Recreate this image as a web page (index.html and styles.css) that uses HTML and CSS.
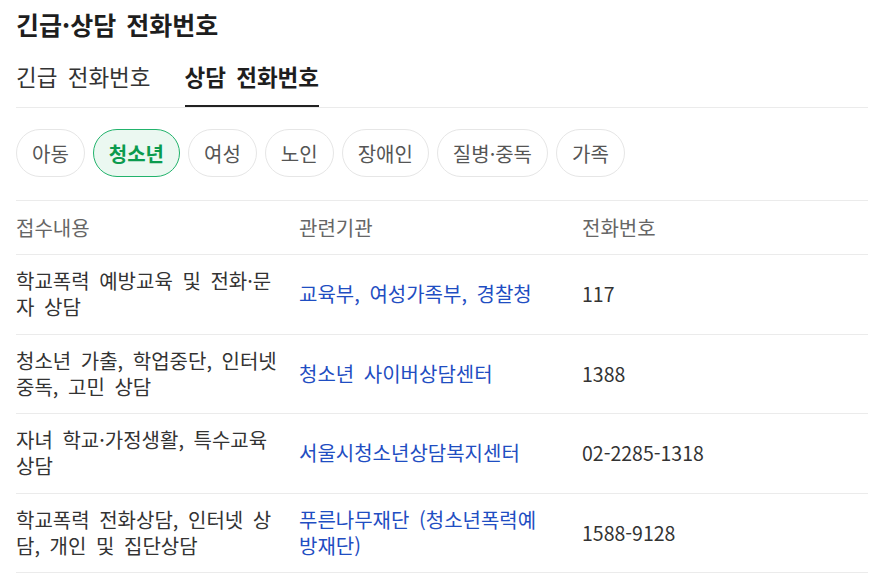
FILE: index.html
```html
<!DOCTYPE html>
<html lang="ko">
<head>
  <meta charset="utf-8">
  <title>긴급·상담 전화번호</title>
  <link rel="stylesheet" href="styles.css">
</head>
<body>
  <div class="phone-book">
    <h2 class="page-title">긴급·상담 전화번호</h2>

    <div class="tabs">
      <a class="tab">긴급 전화번호</a>
      <a class="tab active">상담 전화번호</a>
    </div>

    <div class="chips">
      <button class="chip">아동</button>
      <button class="chip active">청소년</button>
      <button class="chip">여성</button>
      <button class="chip">노인</button>
      <button class="chip">장애인</button>
      <button class="chip">질병·중독</button>
      <button class="chip">가족</button>
    </div>

    <table class="phone-table">
      <colgroup>
        <col class="col-desc">
        <col class="col-org">
        <col class="col-tel">
      </colgroup>
      <thead>
        <tr>
          <th>접수내용</th>
          <th>관련기관</th>
          <th>전화번호</th>
        </tr>
      </thead>
      <tbody>
        <tr>
          <td>학교폭력 예방교육 및 전화·문자 상담</td>
          <td><a href="#">교육부, 여성가족부, 경찰청</a></td>
          <td>117</td>
        </tr>
        <tr>
          <td>청소년 가출, 학업중단, 인터넷 중독, 고민 상담</td>
          <td><a href="#">청소년 사이버상담센터</a></td>
          <td>1388</td>
        </tr>
        <tr>
          <td>자녀 학교·가정생활, 특수교육 상담</td>
          <td><a href="#">서울시청소년상담복지센터</a></td>
          <td>02-2285-1318</td>
        </tr>
        <tr>
          <td>학교폭력 전화상담, 인터넷 상담, 개인 및 집단상담</td>
          <td><a href="#">푸른나무재단 (청소년폭력예방재단)</a></td>
          <td>1588-9128</td>
        </tr>
      </tbody>
    </table>
  </div>
</body>
</html>
```

FILE: styles.css
```css
* {
  margin: 0;
  padding: 0;
  box-sizing: border-box;
}

body {
  font-family: "Noto Sans CJK KR", "Noto Sans", sans-serif;
  background: #fff;
  color: #333;
  word-spacing: 4px;
}

.phone-book {
  width: 852px;
  margin-left: 16px;
  padding-top: 8px;
}

.page-title {
  font-size: 25px;
  line-height: 32px;
  font-weight: 700;
  color: #1e1e1e;
  word-spacing: 3px;
}

.tabs {
  display: flex;
  gap: 34px;
  border-bottom: 1px solid #ebebeb;
}

.tab {
  font-size: 22.5px;
  line-height: 28px;
  padding: 22px 0 15px;
  color: #333;
  border-bottom: 2px solid transparent;
  cursor: pointer;
}

.tab.active {
  font-weight: 700;
  color: #1e1e1e;
  border-bottom-color: #222;
}

.chips {
  display: flex;
  gap: 8px;
  padding: 21px 0 23px;
}

.chip {
  font-family: inherit;
  height: 48px;
  padding: 0 15px;
  font-size: 20px;
  color: #555;
  background: #fff;
  border: 1px solid #e6e6e6;
  border-radius: 24px;
  cursor: pointer;
}

.chip.active {
  font-weight: 700;
  color: #0b9b4e;
  background: #ebf8f1;
  border-color: #22b36c;
}

.phone-table {
  width: 100%;
  table-layout: fixed;
  border-collapse: collapse;
  border-top: 1px solid #ebebeb;
  font-size: 20px;
  line-height: 26px;
}

.col-desc { width: 283px; }
.col-org { width: 283px; }

.phone-table th {
  text-align: left;
  font-weight: 400;
  color: #666;
  padding: 13.5px 0;
  border-bottom: 1px solid #ebebeb;
}

.phone-table td {
  padding: 13.25px 0;
  vertical-align: middle;
  border-bottom: 1px solid #ebebeb;
}

.phone-table td:first-child {
  padding-right: 15px;
}

.phone-table td:nth-child(2) {
  padding-right: 33px;
}

.phone-table td:last-child {
  font-size: 19.5px;
  word-spacing: 0;
}

.phone-table a {
  color: #1f4ec2;
  text-decoration: none;
}
```
